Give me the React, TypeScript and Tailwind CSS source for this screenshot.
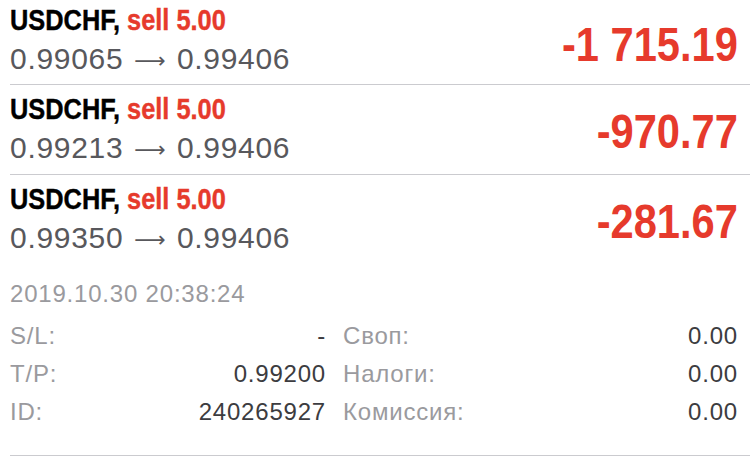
const positions = [
  { symbol: 'USDCHF', type: 'sell 5.00', open: '0.99065', close: '0.99406', profit: '-1 715.19' },
  { symbol: 'USDCHF', type: 'sell 5.00', open: '0.99213', close: '0.99406', profit: '-970.77' },
  { symbol: 'USDCHF', type: 'sell 5.00', open: '0.99350', close: '0.99406', profit: '-281.67' },
];

const details = [
  { label: 'S/L:', value: '-', label2: 'Своп:', value2: '0.00' },
  { label: 'T/P:', value: '0.99200', label2: 'Налоги:', value2: '0.00' },
  { label: 'ID:', value: '240265927', label2: 'Комиссия:', value2: '0.00' },
];

// no condensed face installed, so bold Liberation squeezed horizontally
const condensed = 'inline-block font-bold whitespace-nowrap';

export default function App() {
  return (
    <div className="w-[750px] h-[458px] overflow-hidden bg-white font-[family-name:'Liberation_Sans',Arial,sans-serif]">
      {positions.map((p, i) => (
        <div
          key={i}
          className={`ml-[10px] flex justify-between ${i < positions.length - 1 ? 'border-b border-[#cbcbcf]' : ''} ${i === 0 ? 'h-[85px]' : 'h-[90px]'}`}
        >
          <div className={i === 0 ? 'pt-[2px]' : 'pt-[6px]'}>
            <div className={`${condensed} origin-left scale-x-[0.875] text-[29px] leading-[36px] text-black [-webkit-text-stroke:0.4px_currentColor]`}>
              {p.symbol}, <span className="text-[#e63a2c]">{p.type}</span>
            </div>
            <div className="flex items-baseline text-[30px] leading-[42px] tracking-[0.7px] text-[#58585c]">
              <span>{p.open}</span>
              <span className="mx-[11px] -translate-y-[1px] font-[family-name:'DejaVu_Sans',sans-serif] text-[22px] tracking-normal">⟶</span>
              <span>{p.close}</span>
            </div>
          </div>
          <div className={`${i === 0 ? 'pt-[17px]' : 'pt-[19px]'} pr-[12px]`}>
            <div className={`${condensed} origin-right scale-x-[0.867] text-[48px] leading-[56px] text-[#e63a2c]`}>
              {p.profit}
            </div>
          </div>
        </div>
      ))}

      <div className="ml-[10px] pr-[12px] pt-[11px] pb-[24px] border-b border-[#cbcbcf]">
        <div className="text-[24px] leading-[36px] tracking-[0.8px] text-[#9a9a9e]">2019.10.30 20:38:24</div>
        <div className="mt-[5px] grid grid-cols-[316px_1fr] gap-x-[17px] text-[24px] leading-[38px] tracking-[0.8px]">
          {details.map((d) => (
            <div key={d.label} className="contents">
              <div className="flex justify-between">
                <span className="text-[#9a9a9e]">{d.label}</span>
                <span className="text-[#3c3c40]">{d.value}</span>
              </div>
              <div className="flex justify-between">
                <span className="text-[#9a9a9e]">{d.label2}</span>
                <span className="text-[#3c3c40]">{d.value2}</span>
              </div>
            </div>
          ))}
        </div>
      </div>
    </div>
  );
}
